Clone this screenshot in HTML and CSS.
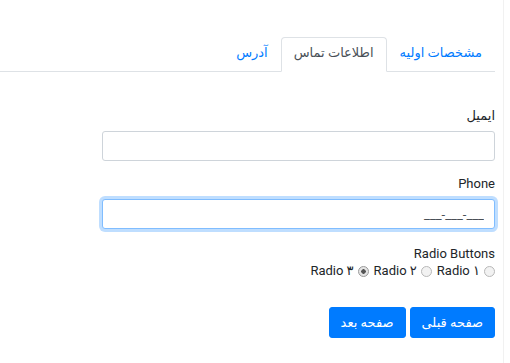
FILE: index.html
```html
<!DOCTYPE html>
<html lang="fa" dir="rtl">

<head>
  <meta charset="UTF-8">
  <meta name="viewport" content="width=device-width, initial-scale=1.0">
  <title> فرم چند مرحله ای </title>
  <link rel="stylesheet" href="styles.css">
</head>

<body>
  <div class="page">
    <ul class="nav-tabs">
      <li><a href="#" class="nav-link">مشخصات اولیه</a></li>
      <li><a href="#" class="nav-link active">اطلاعات تماس</a></li>
      <li><a href="#" class="nav-link">آدرس</a></li>
    </ul>

    <form class="form">
      <div class="form-group">
        <label for="email">ایمیل</label>
        <input type="text" id="email" class="form-control">
      </div>
      <div class="form-group">
        <label for="phone">Phone</label>
        <input type="text" id="phone" class="form-control focus" value="___-___-___">
      </div>
      <div class="form-group radios">
        <label>Radio Buttons</label>
        <div class="radio-row">
          <label class="radio"><input type="radio" name="r"> Radio ۱</label>
          <label class="radio"><input type="radio" name="r"> Radio ۲</label>
          <label class="radio"><input type="radio" name="r" checked> Radio ۳</label>
        </div>
      </div>
      <div class="btn-wrap">
        <button type="button" class="btn">صفحه قبلی</button>
        <button type="button" class="btn">صفحه بعد</button>
      </div>
    </form>
  </div>
</body>

</html>
```

FILE: styles.css
```css
* {
  margin: 0;
  padding: 0;
  box-sizing: border-box;
}

ul {
  list-style: none;
}

body {
  font-family: Roboto, "DejaVu Sans", sans-serif;
  font-size: 13px;
  color: #212529;
  background: #fff;
}

.page {
  width: 504px;
  height: 363px;
  margin-right: 6px;
  padding-top: 37px;
  padding-right: 8px;
  border-right: 1px solid #f1f1f1;
  overflow: hidden;
}

.nav-tabs {
  display: flex;
  border-bottom: 1px solid #dee2e6;
}

.nav-tabs li {
  margin-bottom: -1px;
}

.nav-link {
  display: block;
  height: 35px;
  line-height: 29px;
  padding: 0 12px;
  color: #007bff;
  text-decoration: none;
  border: 1px solid transparent;
  border-radius: 4px 4px 0 0;
}

.nav-link.active {
  color: #495057;
  background: #fff;
  border-color: #dee2e6 #dee2e6 #fff;
}

.form {
  width: 393px;
  padding-top: 36px;
}

.form-group {
  margin-bottom: 15px;
}

.form-group > label {
  display: block;
  margin-bottom: 7px;
  line-height: 16px;
}

.form-control {
  display: block;
  width: 100%;
  height: 30px;
  padding: 0 10px;
  font: inherit;
  color: #495057;
  border: 1px solid #ced4da;
  border-radius: 3px;
  background: #fff;
  outline: none;
}

.form-control.focus {
  border-color: #80bdff;
  box-shadow: 0 0 0 3px rgba(0, 123, 255, .25);
}

.form-group.radios {
  padding-top: 2px;
  margin-bottom: 0;
}

.radio-row {
  display: flex;
  gap: 5px;
  line-height: 16px;
  margin-top: -6px;
}

.radio {
  display: flex;
  align-items: center;
  gap: 4px;
}

.radio input {
  appearance: none;
  width: 11px;
  height: 11px;
  border: 1px solid #b8b8b8;
  border-radius: 50%;
  background: #f2f2f2;
}

.radio input:checked {
  background: radial-gradient(circle, #555 0 2px, #e4e4e4 2.5px);
  border-color: #999;
}

.btn-wrap {
  display: flex;
  gap: 4px;
  margin-top: 28px;
}

.btn {
  height: 31px;
  padding: 0 11px;
  font: inherit;
  color: #fff;
  background: #007bff;
  border: 1px solid #007bff;
  border-radius: 3px;
}
```
